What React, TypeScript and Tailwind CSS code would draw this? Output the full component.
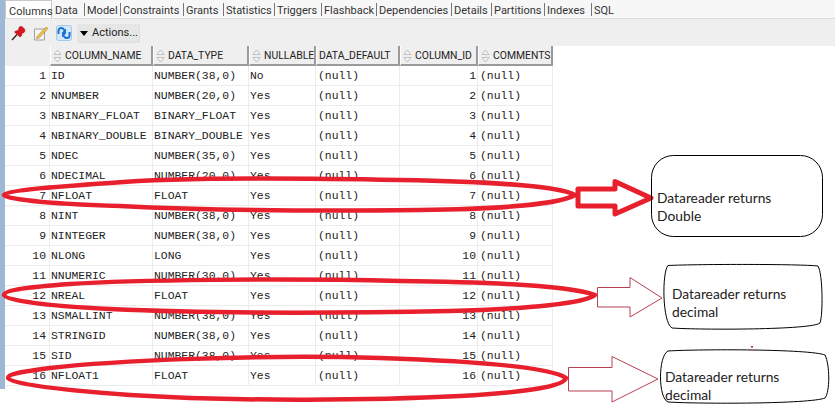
import { ReactNode } from 'react'

const TABS = [
  { label: 'Columns', w: 'w-[47px]' },
  { label: 'Data', w: 'w-[32px]' },
  { label: 'Model', w: 'w-[36px]' },
  { label: 'Constraints', w: 'w-[63px]' },
  { label: 'Grants', w: 'w-[40px]' },
  { label: 'Statistics', w: 'w-[51px]' },
  { label: 'Triggers', w: 'w-[47px]' },
  { label: 'Flashback', w: 'w-[55px]' },
  { label: 'Dependencies', w: 'w-[75px]' },
  { label: 'Details', w: 'w-[40px]' },
  { label: 'Partitions', w: 'w-[53px]' },
  { label: 'Indexes', w: 'w-[47px]' },
  { label: 'SQL', w: 'w-[30px]' },
]

const HEADERS = [
  { label: 'COLUMN_NAME', sort: true },
  { label: 'DATA_TYPE', sort: true },
  { label: 'NULLABLE', sort: true },
  { label: 'DATA_DEFAULT', sort: false },
  { label: 'COLUMN_ID', sort: true },
  { label: 'COMMENTS', sort: true },
]

const ROWS: [string, string, string][] = [
  ['ID', 'NUMBER(38,0)', 'No'],
  ['NNUMBER', 'NUMBER(20,0)', 'Yes'],
  ['NBINARY_FLOAT', 'BINARY_FLOAT', 'Yes'],
  ['NBINARY_DOUBLE', 'BINARY_DOUBLE', 'Yes'],
  ['NDEC', 'NUMBER(35,0)', 'Yes'],
  ['NDECIMAL', 'NUMBER(20,0)', 'Yes'],
  ['NFLOAT', 'FLOAT', 'Yes'],
  ['NINT', 'NUMBER(38,0)', 'Yes'],
  ['NINTEGER', 'NUMBER(38,0)', 'Yes'],
  ['NLONG', 'LONG', 'Yes'],
  ['NNUMERIC', 'NUMBER(30,0)', 'Yes'],
  ['NREAL', 'FLOAT', 'Yes'],
  ['NSMALLINT', 'NUMBER(38,0)', 'Yes'],
  ['STRINGID', 'NUMBER(38,0)', 'Yes'],
  ['SID', 'NUMBER(38,0)', 'Yes'],
  ['NFLOAT1', 'FLOAT', 'Yes'],
]

const COLS = 'grid grid-cols-[45px_103px_96px_67px_84px_78px_75px]'
const cell = 'h-5 border-r border-b border-[#ececec] px-[1px] leading-[20px] whitespace-nowrap overflow-hidden text-[#222]'

function SortIcon() {
  return (
    <svg width="9" height="14" viewBox="0 0 9 14" className="shrink-0">
      <path d="M4.5 1 L8 5.5 H1 Z M4.5 13 L8 8.5 H1 Z" fill="#f4f4f4" stroke="#b4b4b4" strokeWidth="0.8" />
    </svg>
  )
}

function Callout({ className, children }: { className: string; children: ReactNode }) {
  return (
    <div className={`absolute whitespace-nowrap font-['Lato',sans-serif] text-[13.8px] leading-[18px] text-[#222] ${className}`}>
      {children}
    </div>
  )
}

// red marker ellipses, arrows and callout boxes pasted on top of the screenshot
function Markup() {
  return (
    <svg width="835" height="413" viewBox="0 0 835 413" fill="none" className="absolute left-0 top-0">
      <g stroke="#e81f2c" strokeWidth="4.500" strokeLinejoin="round">
        <path d="M575 195 C560 186 500 182 400 180 C300 178 180 177 110 183 C50 187 5 191 4 195 C5 200 60 204 120 206 C220 211 330 211 420 210 C500 209 560 204 575 195 Z" />
        <path d="M595 295 C570 286 490 282 400 281 C280 278 130 280 70 284 C30 287 4 290 4 295 C5 301 50 306 110 309 C220 314 350 313 450 311 C530 309 585 303 595 295 Z" />
        <path d="M566 378 C550 367 470 361 380 358 C260 354 110 361 50 368 C20 372 8 374 8 378 C9 384 60 390 130 395 C240 402 380 400 460 396 C530 392 564 386 566 378 Z" />
        <path strokeWidth="5" d="M578 189 H615 V181.500 L651 198 L615 214 V206 H578 Z" />
      </g>
      <g stroke="#b84050" strokeWidth="1">
        <path d="M597.500 287.500 H630 V277.500 L662 298 L630 317 V307 H597.500 Z" />
        <path d="M568.500 367.500 H612 V356.500 L658 379 L612 402 V391 H568.500 Z" />
      </g>
      <path d="M751 346 h2 v1.500 h-2 Z" fill="#b0203a" />
      <g stroke="#000" strokeWidth="1">
        <rect x="651.500" y="155.500" width="171" height="81" rx="22" />
        <path d="M668 265.500 C700 264 800 264 818 266 C823 275 823 315 820 323 C812 330 700 330 672 328 C662 322 662 272 668 265.500 Z" />
        <path d="M668 351 C700 349 810 349 825 355 C830 365 830 392 825 398 C810 404 700 404 668 402 C658 398 658 356 668 351 Z" />
      </g>
    </svg>
  )
}

export default function App() {
  return (
    <div className="relative h-[413px] w-[835px] overflow-hidden bg-white font-['Roboto',sans-serif]">
      <div className="h-[389px] w-[5px] absolute left-0 top-0 bg-[#9db8d4]" />
      <div className="ml-[5px]">
        <div className="flex h-[19px] items-center border-b border-[#dcdcdc] bg-[#f7f7f7] text-[11px] text-[#333]">
          {TABS.map((t, i) => (
            <div
              key={t.label}
              className={`${t.w} h-full shrink-0 pl-[3px] leading-[22px] ${
                i === 0 ? 'border border-b-0 border-[#c8c8c8] bg-white' : 'relative'
              }`}
            >
              {i > 1 && <span className="absolute left-0 top-[3px] h-[13px] w-px bg-[#777]" />}
              {t.label}
            </div>
          ))}
        </div>
        <div className="flex h-[27px] items-center gap-[7px] bg-[#efefef] pl-[6px] pt-[1px]">
          <svg width="15" height="15" viewBox="0 0 15 15">
            <path d="M1 14 L6 8.500" stroke="#3a1a1a" strokeWidth="1.300" />
            <path d="M8 1.500 C9.500 0 11 0.500 12 1.500 C14 3 14.500 5 13 6.500 L11 7 C11 9 10 10.500 9 11 L3.500 6 C4.500 5 6 4.500 7.500 4.500 Z" fill="#dc141c" stroke="#a00c12" strokeWidth="0.600" />
          </svg>
          <svg width="16" height="16" viewBox="0 0 16 16">
            <path d="M1.500 4 H11.500 V15 H1.500 Z" fill="#f4f4f4" stroke="#a0a0a0" />
            <path d="M4 11.500 L13 2 L15 3.500 L6 13 L3.500 13.500 Z" fill="#eec24a" stroke="#a8842a" strokeWidth="0.600" />
          </svg>
          <svg width="16" height="16" viewBox="0 0 16 16" fill="none">
            <rect x="0.500" y="0.500" width="15" height="15" rx="2" fill="#d5e7f9" stroke="#7fb0e0" strokeWidth="0.600" />
            <path d="M2.500 9 V5.500 C2.500 3 5 2.500 7 3.500 L9 6 M13.500 7 V10.500 C13.500 13 11 13.500 9 12.500 L7 10" stroke="#1a74d8" strokeWidth="2" />
            <path d="M5.500 8 H10 V3.500 Z M10.500 8 H6 V12.500 Z" fill="#1a74d8" />
          </svg>
          <div className="-ml-[2px] flex h-[19px] w-[63px] items-center gap-[4px] rounded-[3px] border-b border-r border-[#dddddd] bg-[#e6e6e6] pl-[3px] pt-[1px] text-[11px] text-[#222]">
            <span className="h-0 w-0 border-x-[4px] border-t-[5px] border-x-transparent border-t-black" />
            Actions...
          </div>
        </div>
        <div className="w-[548px] font-['Liberation_Mono',monospace] text-[11.400px]">
          <div className={`${COLS} h-[20px] bg-[#efefef] font-['Roboto',sans-serif] text-[10.400px] text-[#222]`}>
            <div />
            {HEADERS.map((h) => (
              <div
                key={h.label}
                className="flex items-center gap-[3px] overflow-hidden whitespace-nowrap border-b-2 border-r-2 border-b-[#9a9a9a] border-r-[#9a9a9a] border-l border-l-white pl-[2px] pt-[2px]"
              >
                {h.sort && <SortIcon />}
                {h.label}
              </div>
            ))}
          </div>
          {ROWS.map(([name, type, nullable], i) => (
            <div key={name} className={COLS}>
              <div className={`${cell} pr-[3px] text-right`}>{i + 1}</div>
              <div className={cell}>{name}</div>
              <div className={cell}>{type}</div>
              <div className={cell}>{nullable}</div>
              <div className={`${cell} pl-[2px]`}>(null)</div>
              <div className={`${cell} text-right`}>{i + 1}</div>
              <div className={`${cell} pl-[2px]`}>(null)</div>
            </div>
          ))}
        </div>
      </div>
      <Markup />
      <Callout className="left-[657px] top-[189px]">
        Datareader returns
        <br />
        Double
      </Callout>
      <Callout className="left-[672px] top-[285px]">
        Datareader returns
        <br />
        decimal
      </Callout>
      <Callout className="left-[665px] top-[368px]">
        Datareader returns
        <br />
        decimal
      </Callout>
    </div>
  )
}
